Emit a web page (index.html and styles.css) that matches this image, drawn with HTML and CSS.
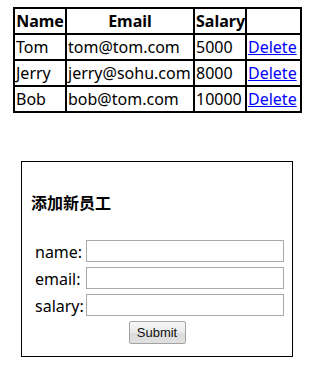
FILE: index.html
```html
<!DOCTYPE html>
<html lang="zh">
<head>
<meta charset="utf-8">
<title>员工管理</title>
<link rel="stylesheet" href="styles.css">
</head>
<body>
<table class="emp-table">
  <colgroup>
    <col class="c-name"><col class="c-email"><col class="c-salary"><col class="c-op">
  </colgroup>
  <tr><th>Name</th><th>Email</th><th>Salary</th><th></th></tr>
  <tr><td>Tom</td><td>tom@tom.com</td><td>5000</td><td><a href="#">Delete</a></td></tr>
  <tr><td>Jerry</td><td>jerry@sohu.com</td><td>8000</td><td><a href="#">Delete</a></td></tr>
  <tr><td>Bob</td><td>bob@tom.com</td><td>10000</td><td><a href="#">Delete</a></td></tr>
</table>

<div class="add-box">
  <h3 class="add-title">添加新员工</h3>
  <form class="add-form">
    <label class="f-label" for="f-name">name:</label>
    <input class="f-input" id="f-name" type="text">
    <label class="f-label" for="f-email">email:</label>
    <input class="f-input" id="f-email" type="text">
    <label class="f-label" for="f-salary">salary:</label>
    <input class="f-input" id="f-salary" type="text">
    <div class="f-actions"><button class="f-submit" type="submit">Submit</button></div>
  </form>
</div>
</body>
</html>
```

FILE: styles.css
```css
html, body {
  background: #ffffff;
}
body {
  margin: 7px 8px;
  font-family: "Noto Sans", "Noto Sans CJK SC", sans-serif;
  font-size: 16px;
  color: #000000;
}
.emp-table {
  border-collapse: collapse;
  table-layout: fixed;
  margin-left: 5px;
  width: 289px;
}
.c-name { width: 52px; }
.c-email { width: 128px; }
.c-salary { width: 52px; }
.c-op { width: 55px; }
.emp-table th,
.emp-table td {
  border: 2px solid #000000;
  padding: 1px 1px;
  line-height: 22px;
  height: 22px;
  white-space: nowrap;
  overflow: hidden;
}
.emp-table th {
  font-weight: bold;
  text-align: center;
}
.emp-table td {
  text-align: left;
}
.emp-table a {
  color: #0000ff;
  text-decoration: underline;
}
.add-box {
  margin: 48px 0 0 13px;
  border: 1px solid #000000;
  padding: 28px 0 12px 9px;
  box-sizing: content-box;
  width: 261px;
}
.add-title {
  margin: 0 0 26px 0;
  font-family: "Noto Sans CJK SC", sans-serif;
  font-size: 16px;
  font-weight: bold;
  line-height: 24px;
}
.add-form {
  display: grid;
  grid-template-columns: 51px 198px;
  row-gap: 5px;
  margin-left: 4px;
  align-items: center;
}
.f-label {
  font-size: 16px;
  height: 22px;
  line-height: 24px;
}
.f-input {
  box-sizing: border-box;
  width: 198px;
  height: 22px;
  margin: 0;
  border: 1px solid #a9a9a9;
  background: #ffffff;
  padding: 0 2px;
  font-size: 13px;
}
.f-actions {
  grid-column: 1 / -1;
  height: 23px;
  text-align: center;
  padding-right: 5px;
  line-height: 0;
}
.f-submit {
  box-sizing: border-box;
  width: 57px;
  height: 23px;
  margin: 0;
  padding: 0;
  font-family: "Liberation Sans", Arial, sans-serif;
  font-size: 13px;
  color: #111111;
  border: 1px solid #a3a3a3;
  border-radius: 2px;
  background: linear-gradient(#f7f7f7, #e9e9e9 50%, #dcdcdc 51%, #e0e0e0);
}
```
